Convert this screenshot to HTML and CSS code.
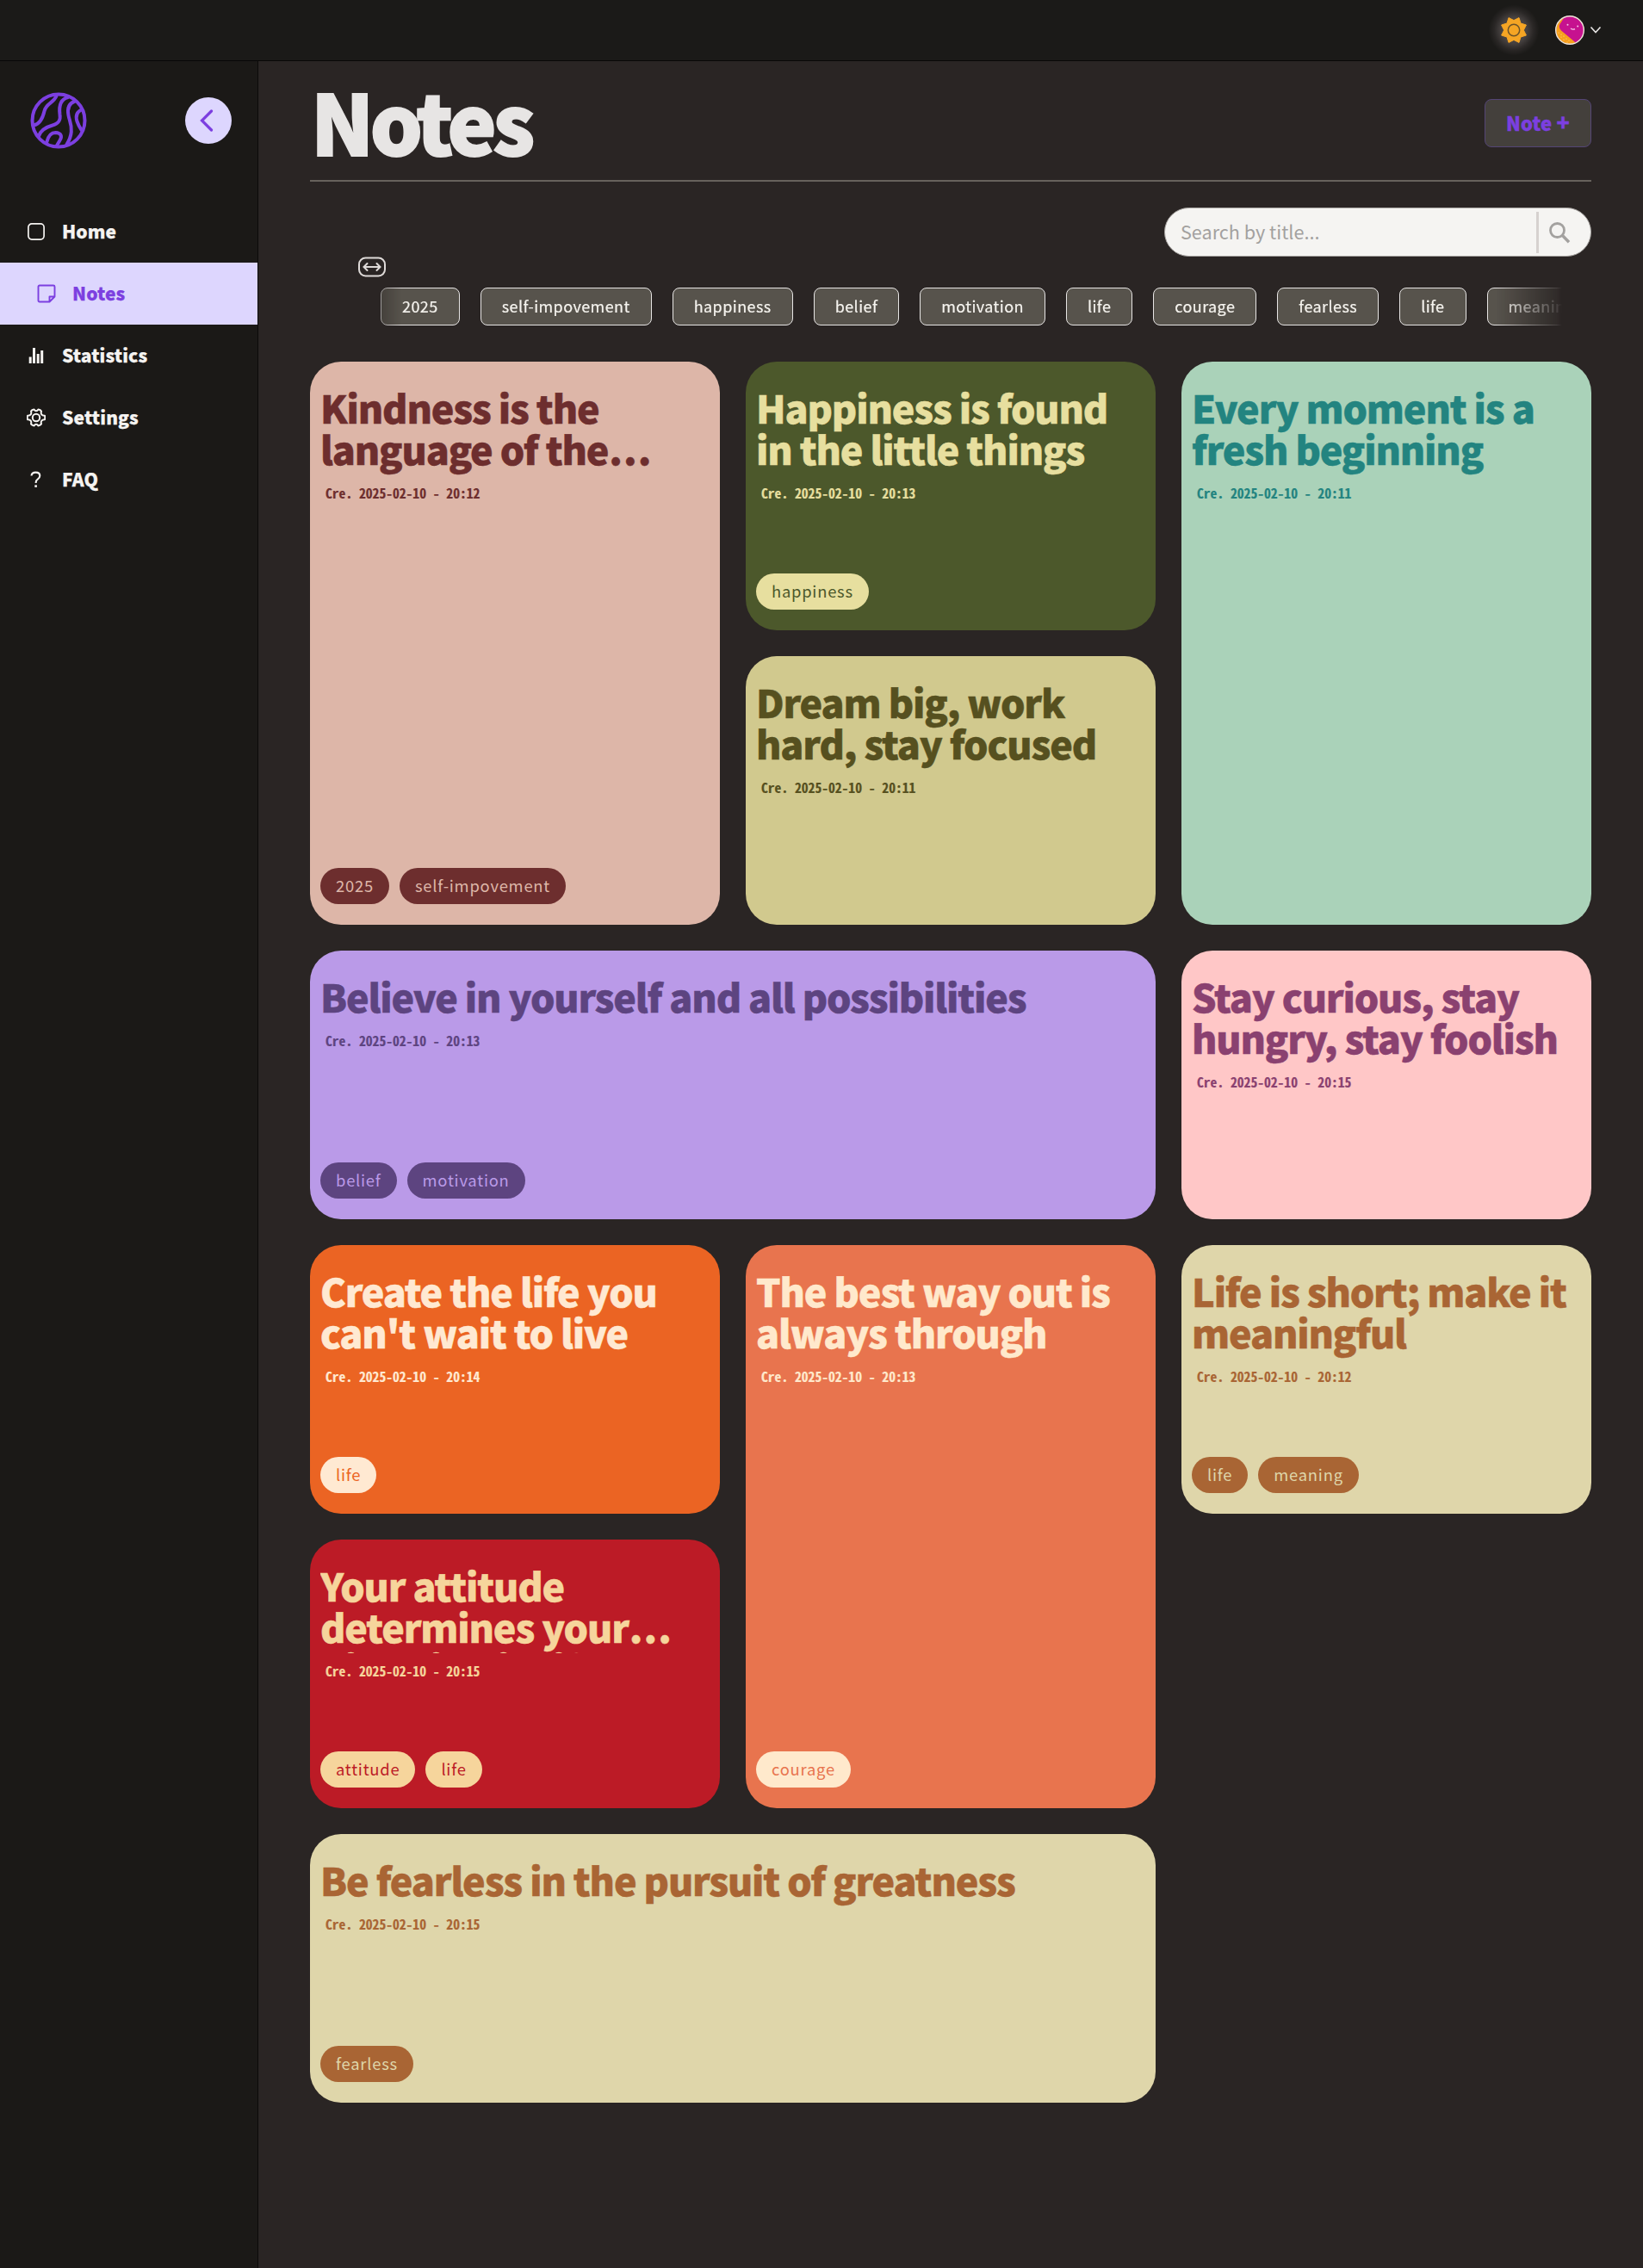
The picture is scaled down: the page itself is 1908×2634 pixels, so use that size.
FILE: index.html
```html
<!DOCTYPE html>
<html lang="en">
<head>
<meta charset="utf-8">
<title>Notes</title>
<link rel="stylesheet" href="styles.css">
</head>
<body>
<header class="topbar">
  <svg class="sun" viewBox="0 0 60 60" width="60" height="60"><path fill="#f5a524" d="M30 18.600 L36 15.600 L38 22 L44.400 24 L41.400 30 L44.400 36 L38 38 L36 44.400 L30 41.400 L24 44.400 L22 38 L15.600 36 L18.600 30 L15.600 24 L22 22 L24 15.600Z" stroke="#f5a524" stroke-width="1" stroke-linejoin="round"/><circle cx="30" cy="30" r="6.700" fill="none" stroke="#6b5228" stroke-width="1.500"/></svg>
  <div class="account">
    <svg viewBox="0 0 34 34" width="34" height="34"><defs><clipPath id="face"><circle cx="17" cy="17" r="16"/></clipPath></defs><g clip-path="url(#face)"><rect width="34" height="34" fill="#f7a01d"/><path d="M12 0 5.500 10Q3.500 14 7 17.500L22 30 26 34H40V0Z" fill="#c6128f"/><g fill="#ffdf9c"><circle cx="4" cy="20" r=".6"/><circle cx="7" cy="22" r=".6"/><circle cx="10" cy="24" r=".6"/><circle cx="13" cy="27" r=".6"/><circle cx="16" cy="29" r=".6"/><circle cx="7" cy="25" r=".6"/><circle cx="10" cy="28" r=".6"/><circle cx="14" cy="31" r=".6"/></g><circle cx="14.500" cy="10.800" r="1" fill="#f6c4e6"/><circle cx="26.200" cy="12.600" r="1" fill="#f6c4e6"/><path d="M18 14.800q2.200 2.200 5 .8" fill="none" stroke="#f6c4e6" stroke-width="1.200"/></g><circle cx="17" cy="17" r="16.300" fill="none" stroke="#f0e4dc" stroke-width="1.400"/></svg>
    <svg viewBox="0 0 14 10" width="14" height="10"><path d="M1.500 1.500 7 7.500 12.500 1.500" fill="none" stroke="#e7e5e4" stroke-width="1.600"/></svg>
  </div>
</header>
<div class="layout">
  <aside class="sidebar">
    <div class="brand">
      <svg viewBox="0 0 66 66" width="66" height="66" fill="none" stroke="#7c3fe0" stroke-width="4" stroke-linecap="round"><circle cx="33" cy="33" r="30.500"/><path d="M4.300 38.500C11 37 14.500 31 16.500 22C18.500 13 27 13 30.500 4.500"/><path d="M10 51C12 45 17 41 26 38.500C34 36 35.500 32 34.500 26C33.500 18 34 8.500 44 6"/><path d="M19.300 58C21 51 25 47 29.500 47C36 47.300 37.500 51.500 34.500 56L30.700 62.500"/><path d="M52 10.500C44.500 13 43 19 44.500 27C45.500 33 48.500 37 47.800 46C47.300 52 45.500 56 42.300 61"/><path d="M59.500 20.500C53 23.500 53 29 54.500 34Q56.500 39.500 59.500 44"/></svg>
      <button class="collapse"><svg viewBox="0 0 16 26" width="16" height="26"><path d="M13.500 2 2.500 13 13.500 24" fill="none" stroke="#7c3fe0" stroke-width="3.200" stroke-linecap="round"/></svg></button>
    </div>
    <nav class="nav">
      <a class="nav-item"><svg viewBox="0 0 22 22" width="22" height="22" fill="none" stroke="currentColor" stroke-width="1.700"><rect x="1.900" y="1.900" width="18.200" height="18.200" rx="4"/></svg><span>Home</span></a>
      <a class="nav-item active"><svg viewBox="0 0 22 22" width="22" height="22" fill="none" stroke="currentColor" stroke-width="1.900" stroke-linejoin="round"><path d="M3 1.500h16q1.500 0 1.500 1.500v11.500l-6 6H3q-1.500 0-1.500-1.500V3Q1.500 1.500 3 1.500ZM14.500 20v-5.500H20"/></svg><span>Notes</span></a>
      <a class="nav-item"><svg viewBox="0 0 22 22" width="22" height="22" fill="currentColor"><path d="M2.700 12.500h3V20h-3zM7 2h3v18H7zM11.700 9h3v11h-3zM16.200 5h3v15h-3z"/></svg><span>Statistics</span></a>
      <a class="nav-item"><svg viewBox="0 0 22 22" width="22" height="22" fill="none" stroke="currentColor" stroke-width="2" stroke-linejoin="round"><path d="M8.600 1.600Q9.600 3.300 11 3.300T13.400 1.600Q16 2 17 3.600Q16.300 6 17.300 7.400T21 8.700Q21.600 11 21 13.300Q18.300 13.300 17.300 14.600T17 18.400Q16 20 13.400 20.400Q12.400 18.700 11 18.700T8.600 20.400Q6 20 5 18.400Q5.700 16 4.700 14.600T1 13.300Q.4 11 1 8.700Q3.700 8.700 4.700 7.400T5 3.600Q6 2 8.600 1.600Z"/><circle cx="11" cy="11" r="4.200"/></svg><span>Settings</span></a>
      <a class="nav-item"><svg viewBox="0 0 22 22" width="22" height="22" fill="none" stroke="currentColor" stroke-width="2.100"><path d="M5.500 6.500Q5.800 2.600 10.500 2.600Q15.300 2.600 15.300 6.600Q15.300 9 12.700 10.700Q10.600 12 10.600 15"/><path d="M10.600 17.300v2.600" stroke-width="2.600"/></svg><span>FAQ</span></a>
    </nav>
  </aside>
  <main class="main">
    <div class="page-head">
      <h1>Notes</h1>
      <button class="new-note">Note <span class="plus">+</span></button>
    </div>
    <div class="search">
      <span class="placeholder">Search by title...</span>
      <span class="search-icon"><svg viewBox="0 0 26 26" width="26" height="26" fill="none" stroke="#a3a19f"><circle cx="10.500" cy="10.500" r="8" stroke-width="2.800"/><path d="M16 16l8 8.300" stroke-width="3.400"/></svg></span>
    </div>
    <div class="scroll-hint"><svg viewBox="0 0 32 24" width="32" height="24" fill="none" stroke="#dedad8" stroke-width="2"><rect x="1" y="1.500" width="30" height="21" rx="7.500"/><path d="M7 12h18M10.500 8l-4 4 4 4M21.500 8l4 4-4 4" stroke-linecap="round"/></svg></div>
    <div class="chips">
      <span>2025</span><span>self-impovement</span><span>happiness</span><span>belief</span><span>motivation</span><span>life</span><span>courage</span><span>fearless</span><span>life</span><span>meaning</span>
    </div>
    <section class="grid">
      <article class="card tall rose"><h2>Kindness is the language of the<span class="dots">...</span></h2><time>Cre. 2025-02-10 - 20:12</time><div class="tags"><span>2025</span><span>self-impovement</span></div></article>
      <article class="card moss"><h2>Happiness is found in the little things</h2><time>Cre. 2025-02-10 - 20:13</time><div class="tags"><span>happiness</span></div></article>
      <article class="card tall mint"><h2>Every moment is a fresh beginning</h2><time>Cre. 2025-02-10 - 20:11</time></article>
      <article class="card olive"><h2>Dream big, work hard, stay focused</h2><time>Cre. 2025-02-10 - 20:11</time></article>
      <article class="card wide violet"><h2>Believe in yourself and all possibilities</h2><time>Cre. 2025-02-10 - 20:13</time><div class="tags"><span>belief</span><span>motivation</span></div></article>
      <article class="card pink"><h2>Stay curious, stay hungry, stay foolish</h2><time>Cre. 2025-02-10 - 20:15</time></article>
      <article class="card orange"><h2>Create the life you can't wait to live</h2><time>Cre. 2025-02-10 - 20:14</time><div class="tags"><span>life</span></div></article>
      <article class="card tall coral"><h2>The best way out is always through</h2><time>Cre. 2025-02-10 - 20:13</time><div class="tags"><span>courage</span></div></article>
      <article class="card sand"><h2>Life is short; make it meaningful</h2><time>Cre. 2025-02-10 - 20:12</time><div class="tags"><span>life</span><span>meaning</span></div></article>
      <article class="card red"><h2>Your attitude determines your<span class="dots">...</span><br>direction in life</h2><time>Cre. 2025-02-10 - 20:15</time><div class="tags"><span>attitude</span><span>life</span></div></article>
      <article class="card wide sand"><h2>Be fearless in the pursuit of greatness</h2><time>Cre. 2025-02-10 - 20:15</time><div class="tags"><span>fearless</span></div></article>
    </section>
  </main>
</div>
</body>
</html>
```
FILE: styles.css
```css
* { box-sizing: border-box; }
body {
  margin: 0;
  background: #2a2524;
  color: #e7e5e4;
  font-family: "Noto Sans CJK KR", "Noto Sans", sans-serif;
  font-variant-ligatures: none;
  display: flex;
  flex-direction: column;
  min-height: 2634px;
}
button { font: inherit; border: 0; padding: 0; }
svg { display: block; flex: none; }

.topbar {
  height: 71px;
  background: #1b1a18;
  border-bottom: 1px solid #080707;
  display: flex;
  align-items: center;
  justify-content: flex-end;
  gap: 18px;
  padding-right: 48px;
}
.sun { background: radial-gradient(closest-side, #514c4b 0%, #464140 50%, #2a2726 76%, #1b1a18 98%); }
.account { display: flex; align-items: center; gap: 6px; }

.layout { display: flex; flex: 1; }
.sidebar { width: 300px; flex: none; background: #1b1917; border-right: 1px solid #0b0a0a; }
.brand {
  display: flex;
  align-items: center;
  justify-content: space-between;
  padding: 36px 30px 0 35px;
}
.collapse {
  width: 54px;
  height: 54px;
  border-radius: 50%;
  background: #ddd6fe;
  display: flex;
  align-items: center;
  justify-content: center;
  padding-right: 4px;
}
.nav { margin-top: 60px; }
.nav-item {
  height: 72px;
  padding-left: 31px;
  display: flex;
  align-items: center;
  gap: 19px;
  font-size: 21px;
  line-height: 30px;
  font-weight: 900;
  letter-spacing: .1px;
  -webkit-text-stroke: .25px currentColor;
  color: #f5f3f1;
}
.nav-item span { padding-bottom: 2px; }
.nav-item.active { padding-left: 43px; background: #ddd6fe; color: #7c3fe0; }

.main { flex: 1; padding: 0 60px; min-width: 0; }
.page-head {
  height: 140px;
  border-bottom: 2px solid #67625c;
  display: flex;
  align-items: center;
  justify-content: space-between;
}
h1 {
  margin: 0 0 0 1px;
  padding-bottom: 1px;
  font-size: 96px;
  line-height: 96px;
  font-weight: 900;
  letter-spacing: -4.5px;
  -webkit-text-stroke: 2px currentColor;
}
.new-note {
  width: 124px;
  height: 56px;
  margin-top: 5px;
  padding-bottom: 3px;
  border-radius: 8px;
  border: 1px solid #544575;
  background: #44403c;
  color: #7c3fe0;
  font-size: 22px;
  line-height: 30px;
  font-weight: 900;
  letter-spacing: .2px;
  -webkit-text-stroke: .4px currentColor;
}
.plus { font-size: 25px; }
.search {
  width: 496px;
  height: 57px;
  margin: 30px 0 0 auto;
  border: 1px solid #a8a5a2;
  border-radius: 29px;
  background: #f5f4f2;
  display: flex;
  align-items: center;
  justify-content: space-between;
  padding-left: 18px;
}
.placeholder { color: #a3a19f; font-size: 21.6px; line-height: 30px; padding-bottom: 2px; }
.search-icon {
  width: 63px;
  height: 48px;
  border-left: 3px solid #d6d1cf;
  display: flex;
  align-items: center;
  padding-left: 11px;
}
.scroll-hint { padding-left: 56px; }
.chips {
  width: 1372px;
  margin: 12px 0 0 82px;
  display: flex;
  gap: 24px;
  overflow: hidden;
  -webkit-mask-image: linear-gradient(to right, rgba(0,0,0,.6), #000 24px, #000 1296px, rgba(0,0,0,.15) 1366px, transparent 1372px);
  mask-image: linear-gradient(to right, rgba(0,0,0,.6), #000 24px, #000 1296px, rgba(0,0,0,.15) 1366px, transparent 1372px);
}
.chips span {
  flex: none;
  height: 44px;
  padding: 0 24px;
  border: 1px solid #e7e5e4;
  border-radius: 8px;
  background: #57534c;
  color: #f5f3ee;
  font-size: 18px;
  line-height: 41px;
  letter-spacing: .425px;
  -webkit-text-stroke: .2px currentColor;
}

.grid {
  margin-top: 42px;
  display: grid;
  grid-template-columns: repeat(3, 1fr);
  grid-auto-rows: 312px;
  gap: 30px;
}
.card {
  border-radius: 36px;
  padding: 29px 12px 24px;
  background: var(--bg);
  color: var(--fg);
  display: flex;
  flex-direction: column;
  align-items: flex-start;
  min-width: 0;
}
.tall { grid-row: span 2; }
.wide { grid-column: span 2; }
.card h2 {
  margin: 0;
  padding-bottom: 7px;
  font-size: 44.8px;
  line-height: 48px;
  font-weight: 900;
  letter-spacing: -1.15px;
  -webkit-text-stroke: .5px currentColor;
  max-height: 103px;
  overflow: hidden;
}
.dots { letter-spacing: 1px; margin-left: 1px; }
.card time {
  margin: 10px 0 0 6px;
  font: 700 15.6px/20px "Noto Sans Mono CJK KR", "Liberation Mono", monospace;
  -webkit-text-stroke: .2px currentColor;
}
.tags { margin-top: auto; display: flex; gap: 12px; }
.tags span {
  height: 42px;
  padding: 0 18px;
  border-radius: 21px;
  background: var(--fg);
  color: var(--bg);
  font-size: 18.4px;
  line-height: 41px;
  letter-spacing: .76px;
}

.rose { --bg: #ddb6a8; --fg: #6d2e2e; }
.moss { --bg: #4c582b; --fg: #e7df9f; }
.mint { --bg: #aad2b9; --fg: #238480; }
.olive { --bg: #d1c98e; --fg: #56501f; }
.violet { --bg: #ba9ae8; --fg: #5d4480; }
.pink { --bg: #ffc7c7; --fg: #8a4170; }
.orange { --bg: #eb6423; --fg: #ffe9d2; }
.coral { --bg: #e8744e; --fg: #ffe9cc; }
.sand { --bg: #dfd6aa; --fg: #a96534; }
.red { --bg: #bc1b26; --fg: #f6d59c; }
```
